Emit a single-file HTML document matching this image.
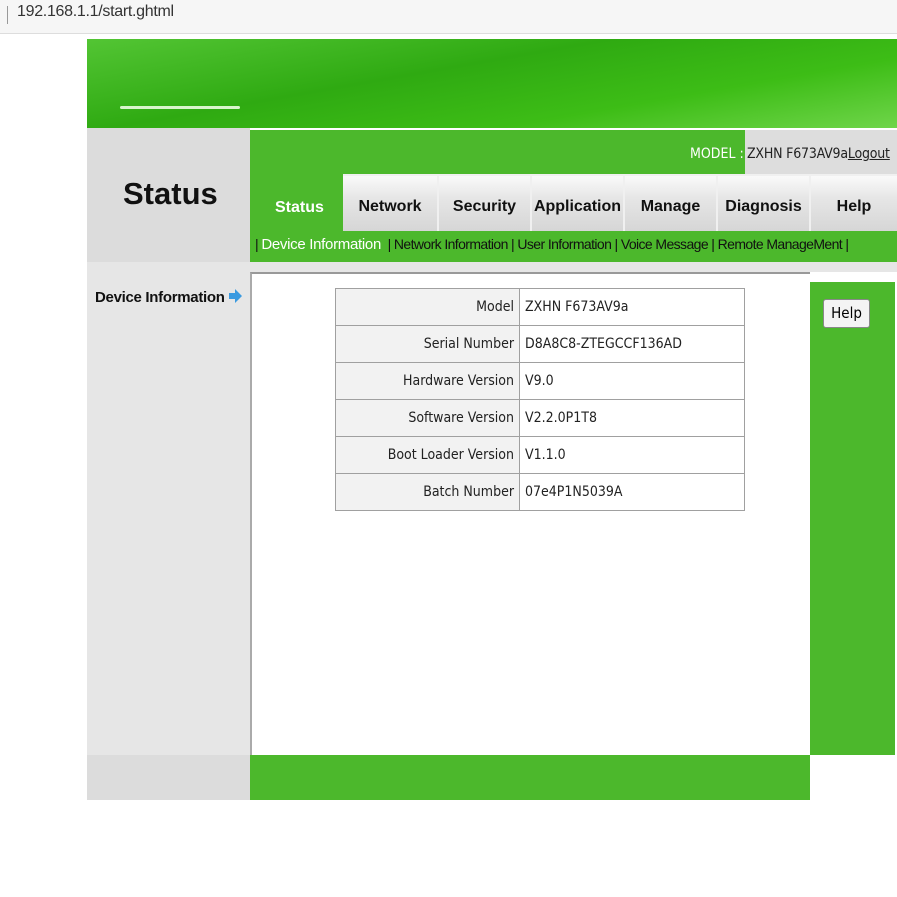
<!DOCTYPE html>
<html><head><style>
*{margin:0;padding:0;box-sizing:border-box}
body{width:897px;height:897px;background:#fff;position:relative;overflow:hidden;font-family:"DejaVu Sans Condensed","Liberation Sans",sans-serif}
.a{position:absolute}
.tab{position:absolute;top:176px;height:55px;background:linear-gradient(#fafafa,#e6e6e6 40%,#d6d6d6);font-weight:bold;font-size:16px;color:#111;text-align:center;line-height:62px;font-family:"Liberation Sans",sans-serif}
td{border:1px solid #a0a0a0;height:37px;font-size:14px;color:#222;padding:0 5px}
td.l{text-align:right;background:#f2f2f2;width:184px}
</style></head><body>
<div class="a" style="left:0;top:0;width:897px;height:34px;background:#f6f6f6;border-bottom:1px solid #ddd"></div>
<div class="a" style="left:7px;top:6px;width:1px;height:18px;background:#999"></div>
<div class="a" style="left:17px;top:3px;font-size:16px;color:#333;font-family:'Liberation Sans',sans-serif;letter-spacing:-0.3px">192.168.1.1/start.ghtml</div>
<div class="a" style="left:87px;top:39px;width:810px;height:89px;background:linear-gradient(170deg,#53c534 0%,#2faa12 40%,#3dbd16 70%,#6fd54a 100%)"></div>
<div class="a" style="left:120px;top:106px;width:120px;height:3px;background:#d8f5cc;border-radius:2px"></div>
<div class="a" style="left:87px;top:128px;width:163px;height:134px;background:#dcdcdc"></div>
<div class="a" style="left:123px;top:176px;font-size:31px;font-weight:bold;color:#111;font-family:'Liberation Sans',sans-serif">Status</div>
<div class="a" style="left:250px;top:130px;width:647px;height:132px;background:#4cb82c"></div>
<div class="a" style="left:745px;top:130px;width:152px;height:44px;background:#ddd"></div>
<div class="a" style="left:690px;top:146px;font-size:14px;color:#fff">MODEL :</div>
<div class="a" style="left:747px;top:146px;font-size:14px;color:#222;letter-spacing:-0.2px">ZXHN F673AV9a<u>Logout</u></div>
<div class="a" style="left:343px;top:174px;width:554px;height:57px;background:#f0f0f0"></div>
<div class="a" style="left:275px;top:199px;font-size:16px;font-weight:bold;color:#fff;font-family:'Liberation Sans',sans-serif">Status</div>
<div class="tab" style="left:343px;width:94px">Network</div>
<div class="tab" style="left:439px;width:91px">Security</div>
<div class="tab" style="left:532px;width:91px">Application</div>
<div class="tab" style="left:625px;width:91px">Manage</div>
<div class="tab" style="left:718px;width:91px">Diagnosis</div>
<div class="tab" style="left:811px;width:86px">Help</div>
<div class="a" style="left:255px;top:236px;font-size:14px;color:#111;white-space:nowrap;letter-spacing:-0.6px;font-family:'Liberation Sans',sans-serif">| <span style="color:#fff;font-size:15px;letter-spacing:-0.3px">Device Information</span> &nbsp;| Network Information | User Information | Voice Message | Remote ManageMent |</div>
<div class="a" style="left:87px;top:262px;width:163px;height:493px;background:#e6e6e6"></div>
<div class="a" style="left:250px;top:262px;width:647px;height:10px;background:#e6e6e6"></div>
<div class="a" style="left:95px;top:289px;font-size:15px;font-weight:bold;color:#111;font-family:'Liberation Sans',sans-serif;letter-spacing:-0.3px">Device Information</div>
<svg class="a" style="left:228px;top:288px" width="15" height="16" viewBox="0 0 15 16"><path d="M1 5h6V1l7 7-7 7v-4H1z" fill="#3a9ae0"/></svg>
<div class="a" style="left:250px;top:272px;width:560px;height:483px;background:#fff;border-top:2px solid #999;border-left:2px solid #aaa"></div>
<div class="a" style="left:810px;top:282px;width:85px;height:473px;background:#4cb82c"></div>
<div class="a" style="left:823px;top:299px;width:47px;height:29px;background:#f4f4f4;border:1px solid #888;border-radius:3px;font-size:15px;text-align:center;line-height:27px">Help</div>
<table class="a" style="left:335px;top:288px;width:410px;border-collapse:collapse">
<tr><td class="l">Model</td><td>ZXHN F673AV9a</td></tr>
<tr><td class="l">Serial Number</td><td>D8A8C8-ZTEGCCF136AD</td></tr>
<tr><td class="l">Hardware Version</td><td>V9.0</td></tr>
<tr><td class="l">Software Version</td><td>V2.2.0P1T8</td></tr>
<tr><td class="l">Boot Loader Version</td><td>V1.1.0</td></tr>
<tr><td class="l">Batch Number</td><td>07e4P1N5039A</td></tr>
</table>
<div class="a" style="left:87px;top:755px;width:163px;height:45px;background:#dcdcdc"></div>
<div class="a" style="left:250px;top:755px;width:560px;height:45px;background:#4cb82c"></div>
</body></html>
